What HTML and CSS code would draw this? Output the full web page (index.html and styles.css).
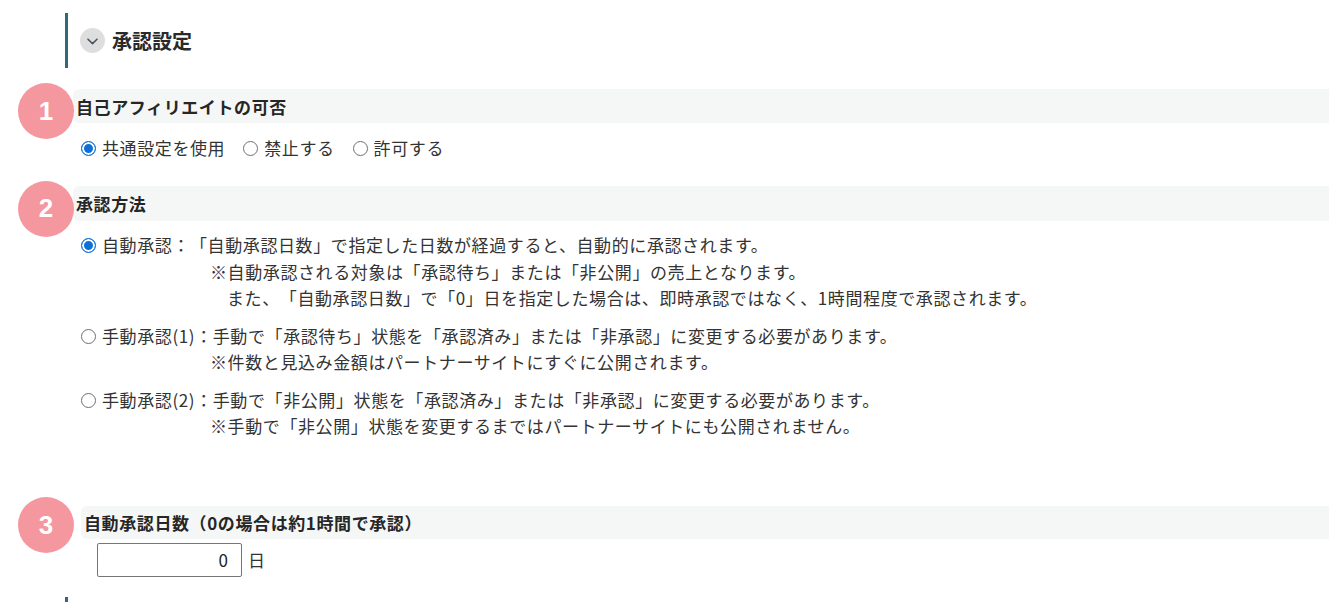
FILE: index.html
```html
<!DOCTYPE html>
<html lang="ja">
<head>
    <meta charset="UTF-8">
    <meta name="viewport" content="width=device-width, initial-scale=1.0">
    <title>承認設定</title>
    <link rel="stylesheet" href="styles.css">
</head>
<body>
    <div class="page">
        <div class="group-head">
            <span class="toggle">
                <svg width="11" height="7" viewBox="0 0 11 7"><path d="M1 1.2 L5.5 5.6 L10 1.2" fill="none" stroke="#4a5563" stroke-width="1.6" stroke-linecap="round" stroke-linejoin="round"/></svg>
            </span>
            <h2>承認設定</h2>
        </div>

        <div class="group-body">
            <!-- 1 -->
            <section class="item item-first">
                <div class="item-head">
                    <span class="badge">1</span>
                    <h3>自己アフィリエイトの可否</h3>
                </div>
                <div class="choices">
                    <label class="radio"><input type="radio" name="self" checked><span>共通設定を使用</span></label>
                    <label class="radio"><input type="radio" name="self"><span>禁止する</span></label>
                    <label class="radio"><input type="radio" name="self"><span>許可する</span></label>
                </div>
            </section>

            <!-- 2 -->
            <section class="item item-method">
                <div class="item-head">
                    <span class="badge">2</span>
                    <h3>承認方法</h3>
                </div>
                <div class="options">
                    <label class="option">
                        <input type="radio" name="method" checked>
                        <span class="option-text">
                            <span class="line">自動承認：「自動承認日数」で指定した日数が経過すると、自動的に承認されます。</span>
                            <span class="line note">※自動承認される対象は「承認待ち」または「非公開」の売上となります。</span>
                            <span class="line note note-indent">また、「自動承認日数」で「0」日を指定した場合は、即時承認ではなく、1時間程度で承認されます。</span>
                        </span>
                    </label>
                    <label class="option">
                        <input type="radio" name="method">
                        <span class="option-text">
                            <span class="line">手動承認(1)：手動で「承認待ち」状態を「承認済み」または「非承認」に変更する必要があります。</span>
                            <span class="line note">※件数と見込み金額はパートナーサイトにすぐに公開されます。</span>
                        </span>
                    </label>
                    <label class="option">
                        <input type="radio" name="method">
                        <span class="option-text">
                            <span class="line">手動承認(2)：手動で「非公開」状態を「承認済み」または「非承認」に変更する必要があります。</span>
                            <span class="line note">※手動で「非公開」状態を変更するまではパートナーサイトにも公開されません。</span>
                        </span>
                    </label>
                </div>
            </section>

            <!-- 3 -->
            <section class="item item-days">
                <div class="item-head">
                    <span class="badge">3</span>
                    <h3>自動承認日数（0の場合は約1時間で承認）</h3>
                </div>
                <div class="days-row">
                    <input class="days-input" type="text" value="0">
                    <span>日</span>
                </div>
            </section>
        </div>

        <!-- next group, only its edge shows -->
        <div class="group-head group-next">
            <span class="toggle">
                <svg width="11" height="7" viewBox="0 0 11 7"><path d="M1 1.2 L5.5 5.6 L10 1.2" fill="none" stroke="#4a5563" stroke-width="1.6" stroke-linecap="round" stroke-linejoin="round"/></svg>
            </span>
        </div>
    </div>
</body>
</html>
```

FILE: styles.css
```css
* {
    margin: 0;
    padding: 0;
    box-sizing: border-box;
}

body {
    font-family: "Noto Sans CJK JP", "Noto Sans", sans-serif;
    font-size: 17px;
    letter-spacing: 0.6px;
    text-spacing-trim: space-all;
    color: #333;
    background-color: #fff;
}

.page {
    padding: 13px 0 40px 65px;
}

/* collapsible group header */
.group-head {
    display: flex;
    align-items: center;
    gap: 7px;
    height: 55px;
    border-left: 3px solid #2f6a76;
    padding-left: 12px;
}

.group-next {
    margin-top: 20px;
}

.toggle {
    width: 25px;
    height: 25px;
    border-radius: 50%;
    background-color: #dedede;
    display: flex;
    align-items: center;
    justify-content: center;
    padding-top: 2px;
}

.group-head h2 {
    font-size: 20px;
    font-weight: bold;
    line-height: 1;
    letter-spacing: 0;
    color: #2a2a2a;
}

.group-body {
    padding-left: 8px;
}

/* numbered items */
.item-first {
    margin-top: 21px;
}

.item-method {
    margin-top: 25px;
}

.item-days {
    margin-top: 66px;
    margin-left: 8px;
}

.item-head {
    position: relative;
    display: flex;
    align-items: center;
    height: 34px;
    padding-left: 3px;
    background-color: #f5f7f7;
    border-radius: 6px 0 0 6px;
}

.item-method .item-head {
    height: 35px;
}

.item-days .item-head {
    height: 33px;
}

.item-head h3 {
    font-size: 17px;
    font-weight: bold;
    line-height: 1;
    color: #262626;
}

.badge {
    position: absolute;
    left: -55px;
    top: calc(50% - 23px);
    width: 56px;
    height: 56px;
    border-radius: 50%;
    background-color: #f4979e;
    color: #fff;
    font-family: "Liberation Sans", Arial, sans-serif;
    font-size: 26px;
    font-weight: bold;
    letter-spacing: 0;
    display: flex;
    align-items: center;
    justify-content: center;
    z-index: 1;
}

.item-days .badge {
    left: -63px;
    top: calc(50% - 25px);
}

/* radios */
input[type="radio"] {
    appearance: none;
    -webkit-appearance: none;
    flex: none;
    width: 15px;
    height: 15px;
    border: 1.5px solid #707070;
    border-radius: 50%;
    background-color: #fff;
}

input[type="radio"]:checked {
    border-color: #0c70d6;
    background-color: #0c70d6;
    box-shadow: inset 0 0 0 2px #fff;
}

.choices {
    display: flex;
    gap: 18px;
    padding: 12px 0 0 8px;
    line-height: 26px;
}

.radio {
    display: flex;
    align-items: center;
    gap: 6px;
}

.options {
    padding: 11px 0 0 8px;
}

.option {
    display: flex;
    align-items: flex-start;
    gap: 6px;
    line-height: 26.5px;
}

.option + .option {
    margin-top: 11px;
}

.option input {
    margin-top: 6px;
}

.option-text {
    display: flex;
    flex-direction: column;
}

.note {
    padding-left: 108px;
}

.note-indent {
    padding-left: calc(108px + 1em);
}

/* auto approval days */
.days-row {
    display: flex;
    align-items: center;
    gap: 6px;
    margin-top: 4px;
    padding-left: 16px;
}

.days-input {
    width: 145px;
    height: 34px;
    border: 1px solid #767676;
    border-radius: 2px;
    padding-right: 13px;
    text-align: right;
    font-family: inherit;
    font-size: 17px;
    color: #222;
}
```
